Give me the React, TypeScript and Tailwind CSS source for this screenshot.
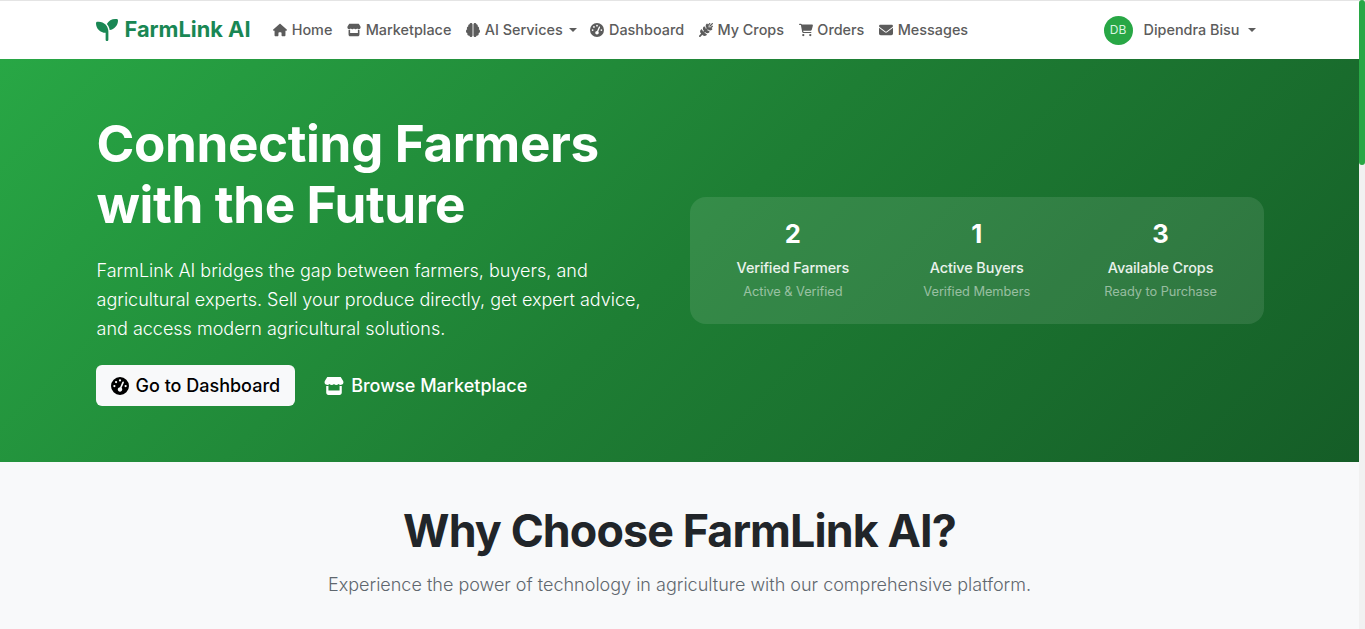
import { FaBrain, FaCartShopping, FaEnvelope, FaGaugeHigh, FaHouse, FaSeedling, FaStore, FaWheatAwn } from "react-icons/fa6";

const navLinks = [
  { label: "Home", icon: FaHouse },
  { label: "Marketplace", icon: FaStore },
  { label: "AI Services", icon: FaBrain, caret: true },
  { label: "Dashboard", icon: FaGaugeHigh },
  { label: "My Crops", icon: FaWheatAwn },
  { label: "Orders", icon: FaCartShopping },
  { label: "Messages", icon: FaEnvelope },
];

const stats = [
  { value: "2", title: "Verified Farmers", note: "Active & Verified" },
  { value: "1", title: "Active Buyers", note: "Verified Members" },
  { value: "3", title: "Available Crops", note: "Ready to Purchase" },
];

function Caret({ className }: { className: string }) {
  return <span className={`inline-block border-x-[4.3px] border-t-[4.3px] border-x-transparent ${className}`} />;
}

export default function App() {
  return (
    <div className="flex h-screen overflow-hidden bg-[#f8f9fa] font-['Inter',sans-serif]">
      <div className="min-w-0 flex-1">
        <nav className="h-[59px] border-t border-[#e4e4e4] bg-white">
          <div className="mx-auto flex h-full w-[1200px] items-center px-4">
            <div className="flex items-center gap-[7px] text-[#198754]">
              <FaSeedling className="h-[22px] w-[22px]" />
              <span className="text-[21.8px] font-bold leading-none">FarmLink AI</span>
            </div>
            <ul className="ml-[22.5px] flex items-center gap-[14.7px]">
              {navLinks.map((link) => (
                <li key={link.label} className="flex items-center gap-[4.7px] text-[14.4px] font-medium text-[#5c5c5c]">
                  <link.icon className="h-[14px] w-auto" />
                  <span>{link.label}</span>
                  {link.caret && <Caret className="-mr-[1.7px] ml-[2px] border-t-[#5c5c5c]" />}
                </li>
              ))}
            </ul>
            <div className="ml-auto flex items-center pr-[8px] text-[14.4px] font-medium text-[#5c5c5c]">
              <span className="flex h-[29px] w-[29px] items-center justify-center rounded-full bg-[#28a745] text-[12px] font-normal text-[#d9f5e0]">DB</span>
              <span className="ml-[11px]">Dipendra Bisu</span>
              <Caret className="ml-[8px] border-t-[#5c5c5c]" />
            </div>
          </div>
        </nav>

        <section className="h-[403px] bg-[linear-gradient(135deg,#28a745_0%,#1e7e34_50%,#155d27_100%)] text-white">
          <div className="mx-auto flex h-full w-[1200px] items-center gap-[48px] px-4">
            <div className="w-[546.5px] shrink-0 pb-[2px] pl-[1px]">
              <h1 className="text-[51.2px] font-bold leading-[61px] tracking-[-0.4px]">Connecting Farmers with the Future</h1>
              <p className="mt-[21px] text-[18px] font-light leading-[29px] text-white">
                FarmLink AI bridges the gap between farmers, buyers, and agricultural experts. Sell your produce directly, get expert advice, and access modern agricultural solutions.
              </p>
              <div className="-ml-[1px] mt-[22px] flex items-center gap-[4px]">
                <button className="flex h-[41px] items-center gap-[7px] rounded-[6px] bg-[#f8f9fa] px-[15px] text-[18px] font-medium text-black">
                  <FaGaugeHigh className="h-[18px] w-[18px]" />
                  Go to Dashboard
                </button>
                <button className="flex h-[41px] items-center gap-[7px] px-[25px] text-[18px] font-medium text-white">
                  <FaStore className="h-[18px] w-[20px]" />
                  Browse Marketplace
                </button>
              </div>
            </div>
            <div className="grid h-[127px] flex-1 grid-cols-3 items-center rounded-[16px] bg-white/10 px-[11px] pb-[2px]">
              {stats.map((stat) => (
                <div key={stat.title} className="flex flex-col items-center">
                  <div className="text-[25.6px] font-bold leading-[30px]">{stat.value}</div>
                  <div className="mt-[10px] text-[14.4px] font-medium leading-[18px] tracking-[-0.1px] text-white/90">{stat.title}</div>
                  <div className="mt-[7px] text-[12.8px] leading-[16px] tracking-[-0.05px] text-white/50">{stat.note}</div>
                </div>
              ))}
            </div>
          </div>
        </section>

        <section className="pt-[44px] text-center">
          <h2 className="text-[44.8px] font-bold leading-[50px] tracking-[-0.9px] text-[#212529]">Why Choose FarmLink AI?</h2>
          <p className="mt-[16px] text-[18px] font-light leading-[26px] text-[#5f676e]">
            Experience the power of technology in agriculture with our comprehensive platform.
          </p>
        </section>
      </div>

      <div className="w-[6px] shrink-0 bg-[#f1f1f1]">
        <div className="h-[165px] rounded-[3px] bg-[#28a745]" />
      </div>
    </div>
  );
}
